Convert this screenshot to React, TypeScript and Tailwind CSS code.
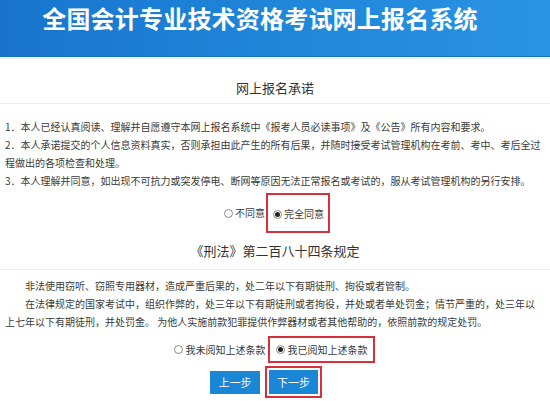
const font = { fontFamily: '"Noto Sans CJK SC", "Noto Sans", sans-serif' };

function Radio({ checked }: { checked?: boolean }) {
  return (
    <span className="inline-flex items-center justify-center w-[9px] h-[9px] rounded-full border border-[#8a8a8a] bg-white mr-[2px] shrink-0">
      {checked && <span className="w-[5px] h-[5px] rounded-full bg-[#222]" />}
    </span>
  );
}

export default function App() {
  return (
    <div className="w-[550px] h-[401px] bg-white overflow-hidden flex flex-col text-[#3a3a3a]" style={font}>
      {/* header */}
      <div className="h-[57px] shrink-0 bg-gradient-to-r from-[#1874cc] via-[#1f86da] to-[#2993e3] flex justify-center pt-[3px] pr-[30px] border-b border-[#1670c4]">
        <h1 className="text-[24px] leading-[30px] font-bold text-white tracking-[0.2px]">全国会计专业技术资格考试网上报名系统</h1>
      </div>
      <div className="h-[4px] bg-gradient-to-b from-[#e6f1fb] to-white" />

      {/* 承诺 */}
      <div className="mt-[18px] text-center text-[13px] leading-[18px] text-[#333]">网上报名承诺</div>
      <div className="mt-[6px] border-t border-[#ececec]" />

      <div className="mt-[14px] pl-[5px] pr-[3px] text-[10px] leading-[18px]">
        <p>1．本人已经认真阅读、理解并自愿遵守本网上报名系统中《报考人员必读事项》及《公告》所有内容和要求。</p>
        <p>2．本人承诺提交的个人信息资料真实，否则承担由此产生的所有后果，并随时接受考试管理机构在考前、考中、考后全过程做出的各项检查和处理。</p>
        <p>3．本人理解并同意，如出现不可抗力或突发停电、断网等原因无法正常报名或考试的，服从考试管理机构的另行安排。</p>
      </div>

      <div className="mt-[3px] flex justify-center items-center text-[10px] leading-[14px] pl-[4px]">
        <label className="flex items-center mr-[1px]">
          <Radio />
          不同意
        </label>
        <div className="border-2 border-[#d8303a] h-[40px] pl-[5px] pr-[4px] pt-[2px] flex items-center">
          <label className="flex items-center">
            <Radio checked />
            完全同意
          </label>
        </div>
      </div>

      <div className="mt-[9px] text-center text-[13px] leading-[18px] text-[#333]">《刑法》第二百八十四条规定</div>
      <div className="mt-[9px] border-t border-[#ececec]" />

      {/* 刑法 */}
      <div className="mt-[7px] pl-[5px] pr-[10px] text-[10px] leading-[18px]">
        <p className="indent-[20px]">非法使用窃听、窃照专用器材，造成严重后果的，处二年以下有期徒刑、拘役或者管制。</p>
        <p className="indent-[20px]">在法律规定的国家考试中，组织作弊的，处三年以下有期徒刑或者拘役，并处或者单处罚金；情节严重的，处三年以上七年以下有期徒刑，并处罚金。 为他人实施前款犯罪提供作弊器材或者其他帮助的，依照前款的规定处罚。</p>
      </div>

      <div className="mt-[5px] flex justify-center items-center text-[10px] leading-[14px] pr-[2px]">
        <label className="flex items-center mr-[2px]">
          <Radio />
          <span className="ml-[1px]">我未阅知上述条款</span>
        </label>
        <div className="border-2 border-[#d8303a] h-[27px] w-[107px] pl-[6px] flex items-center">
          <label className="flex items-center">
            <Radio checked />
            <span className="ml-[1px]">我已阅知上述条款</span>
          </label>
        </div>
      </div>

      <div className="mt-[3px] flex justify-center items-center gap-[5px] pr-[18px]">
        <button className="w-[50px] h-[23px] bg-[#1a86d6] text-white text-[11px] leading-[23px]">上一步</button>
        <div className="border-2 border-[#d8303a] p-[2px]">
          <button className="w-[49px] h-[24px] bg-[#1a86d6] text-white text-[11px] leading-[24px] block">下一步</button>
        </div>
      </div>
    </div>
  );
}
